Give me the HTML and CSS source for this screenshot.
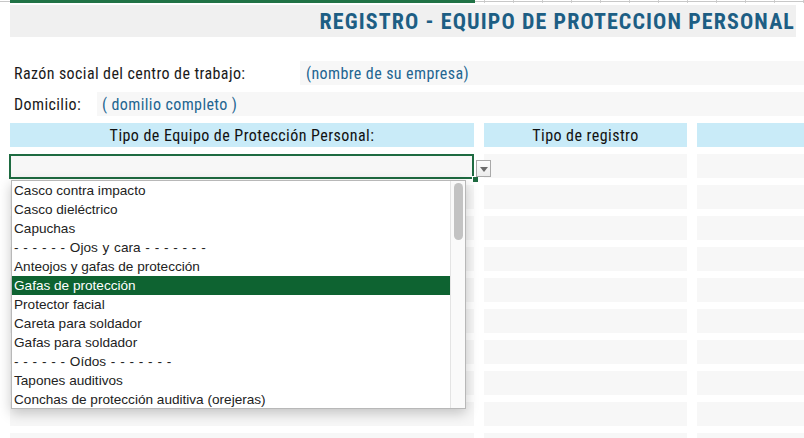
FILE: index.html
```html
<!DOCTYPE html>
<html lang="es">

<head>
    <meta charset="UTF-8">
    <title>Registro - Equipo de Proteccion Personal</title>
    <link rel="stylesheet" href="styles.css">
</head>

<body>
    <div class="topline"><div class="topline-sel"></div></div>

    <div class="title-band">
        <h1>REGISTRO - EQUIPO DE PROTECCION PERSONAL</h1>
    </div>

    <div class="field-row first-field">
        <span class="field-label label-razon">Razón social del centro de trabajo:</span>
        <span class="field-value">(nombre de su empresa)</span>
    </div>
    <div class="field-row">
        <span class="field-label label-domicilio">Domicilio:</span>
        <span class="field-value value-domicilio">( domilio completo )</span>
    </div>

    <div class="grid">
        <div class="cell head">Tipo de Equipo de Protección Personal:</div>
        <div class="cell head">Tipo de registro</div>
        <div class="cell head"></div>

        <div class="cell active">
            <div class="active-frame"></div>
            <div class="fill-handle"></div>
            <div class="drop-button"><span class="drop-arrow"></span></div>
            <div class="drop-list">
                <ul class="drop-items">
                    <li>Casco contra impacto</li>
                    <li>Casco dieléctrico</li>
                    <li>Capuchas</li>
                    <li class="sep">- - - - - - Ojos y cara - - - - - - -</li>
                    <li>Anteojos y gafas de protección</li>
                    <li class="selected">Gafas de protección</li>
                    <li>Protector facial</li>
                    <li>Careta para soldador</li>
                    <li>Gafas para soldador</li>
                    <li class="sep">- - - - - - Oídos - - - - - - -</li>
                    <li>Tapones auditivos</li>
                    <li>Conchas de protección auditiva (orejeras)</li>
                </ul>
                <div class="drop-scroll"><div class="drop-thumb"></div></div>
            </div>
        </div>
        <div class="cell"></div>
        <div class="cell"></div>

        <div class="cell"></div><div class="cell"></div><div class="cell"></div>
        <div class="cell"></div><div class="cell"></div><div class="cell"></div>
        <div class="cell"></div><div class="cell"></div><div class="cell"></div>
        <div class="cell"></div><div class="cell"></div><div class="cell"></div>
        <div class="cell"></div><div class="cell"></div><div class="cell"></div>
        <div class="cell"></div><div class="cell"></div><div class="cell"></div>
        <div class="cell"></div><div class="cell"></div><div class="cell"></div>
        <div class="cell"></div><div class="cell"></div><div class="cell"></div>
        <div class="cell"></div><div class="cell"></div><div class="cell"></div>
    </div>
</body>

</html>
```

FILE: styles.css
```css
body { margin: 0; padding: 0; background: #fff; overflow: hidden; font-family: "Liberation Sans Narrow", "Roboto Condensed", "Liberation Sans", sans-serif; color: #1a1a1a; }
h1 { margin: 0; }

/* column header strip at the very top */
.topline {
    height: 3px;
    border-top: 1px solid transparent;
    background:
        linear-gradient(#c8c8c8, #c8c8c8) 0 1px / 100% 1px no-repeat,
        repeating-linear-gradient(90deg, #d0d0d0 0 1px, transparent 1px 29px) 484px 0 / 100% 4px no-repeat;
    margin-top: -1px;
}
.topline-sel { width: 465px; height: 3px; margin-left: 10px; background: #217346; }

.title-band { height: 32px; margin: 2px 8px 0 10px; background: #f0f0f0; display: flex; align-items: center; justify-content: flex-end; }
.title-band h1 { font-size: 22px; font-weight: bold; color: #1d5e84; letter-spacing: 1.1px; padding-top: 1px; margin-right: 1px; }

.field-row { display: flex; height: 24px; margin-top: 7px; padding-left: 14px; font-size: 16px; letter-spacing: 0.4px; line-height: 25px; }
.first-field { margin-top: 24px; }
.field-label { flex: none; }
.label-razon { width: 286px; }
.label-domicilio { width: 83px; }
.field-value { flex: 1; background: #f7f7f7; color: #236591; padding-left: 6px; }
.value-domicilio { padding-left: 5px; }

.grid {
    display: grid;
    grid-template-columns: 464px 203px 1fr;
    grid-auto-rows: 24px;
    column-gap: 10px;
    row-gap: 7px;
    padding-left: 10px;
    margin-top: 7px;
}
.cell { background: #f7f7f7; }
.cell.head { background: #c9ebf8; font-size: 16px; letter-spacing: 0.45px; line-height: 25px; text-align: center; color: #111; }
.cell.active { position: relative; }

.active-frame { position: absolute; left: -1px; top: 0; width: 465px; height: 25px; border: 2px solid #1e6b41; box-sizing: border-box; }
.fill-handle { position: absolute; left: 462px; top: 22px; width: 5px; height: 5px; background: #1e6b41; border: 1px solid #fff; }
.drop-button {
    position: absolute; left: 466px; top: 6px; width: 15px; height: 17px;
    box-sizing: border-box; border: 1px solid #a9a9a9; background: linear-gradient(#fdfdfd, #ececec);
    display: flex; align-items: center; justify-content: center;
}
.drop-arrow { width: 0; height: 0; border-left: 4px solid transparent; border-right: 4px solid transparent; border-top: 5px solid #6b6b6b; margin-top: 1px; }

.drop-list {
    position: absolute; left: 1px; top: 26px; width: 455px; height: 229px;
    box-sizing: border-box; border: 1px solid #b8b8b8; background: #fff;
    box-shadow: 0 4px 12px rgba(0, 0, 0, 0.22);
    display: flex; z-index: 5;
}
.drop-items { list-style: none; margin: 0; padding: 0; flex: 1; font-family: "Liberation Sans", Arial, sans-serif; font-size: 13.6px; color: #222; }
.drop-items li { height: 19px; line-height: 19px; padding-left: 2px; white-space: nowrap; }
.drop-items li.sep { word-spacing: 1px; }
.drop-items li.selected { background: #0e6331; color: #fff; }
.drop-scroll { width: 15px; border-left: 1px solid #e4e4e4; background: #fafafa; padding: 2px 0 0 3px; box-sizing: border-box; }
.drop-thumb { width: 9px; height: 57px; border-radius: 5px; background: #c3c3c3; }
```
